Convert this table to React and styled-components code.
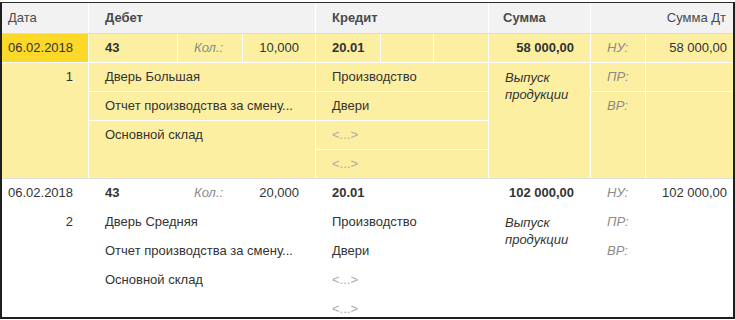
import styled, { createGlobalStyle } from "styled-components";

const GlobalStyle = createGlobalStyle`
  html, body {
    margin: 0;
    padding: 0;
    background: #ffffff;
  }
  body {
    font-family: "Liberation Sans", Arial, sans-serif;
    font-size: 13px;
    color: #333333;
  }
`;

const COLUMNS = "86px 88px 64px 72px 64px 52px 54px 101px 54px 1fr";

const Page = styled.div`
  padding-top: 2px;
  width: 735px;
`;

const Frame = styled.div`
  box-sizing: border-box;
  width: 735px;
  height: 317px;
  border-top: 1px solid #2b2b2b;
  border-left: 2px solid #1e1e1e;
  border-right: 2px solid #1e1e1e;
  border-bottom: 2px solid #1e1e1e;
  overflow: hidden;
  background: #ffffff;
`;

const Header = styled.div`
  display: grid;
  grid-template-columns: ${COLUMNS};
  grid-template-rows: 30px;
  column-gap: 1px;
  background: #ffffff;
  border-bottom: 1px solid #dcdcdc;
`;

const HeaderCell = styled.div`
  grid-column: ${(p) => p.$col};
  background: #f2f2f2;
  color: #4a4a4a;
  font-weight: ${(p) => (p.$bold ? 700 : 400)};
  line-height: 30px;
  padding: ${(p) => p.$pad || "0 16px"};
  text-align: ${(p) => p.$align || "left"};
  white-space: nowrap;
`;

const Body = styled.div`
  display: flex;
  flex-direction: column;
  gap: 1px;
  background: #dedede;
`;

const Record = styled.div`
  display: grid;
  grid-template-columns: ${COLUMNS};
  grid-template-rows: repeat(5, 28px);
  gap: 1px;
  background: #ffffff;
`;

const Cell = styled.div`
  grid-column: ${(p) => p.$col};
  grid-row: ${(p) => p.$row};
  background: ${(p) => (p.$accent ? "#fcd829" : p.$selected ? "#fcefa1" : "#ffffff")};
  padding: ${(p) => p.$pad || "0 16px"};
  line-height: 28px;
  text-align: ${(p) => p.$align || "left"};
  font-weight: ${(p) => (p.$bold ? 700 : 400)};
  font-style: ${(p) => (p.$label || p.$note ? "italic" : "normal")};
  color: ${(p) => (p.$label ? "#8a8a8a" : p.$empty ? "#a9a9a9" : "#333333")};
  white-space: nowrap;
  overflow: hidden;
`;

const Note = styled(Cell)`
  white-space: normal;
  line-height: 17px;
  padding: 6px 16px 0;
`;

const records = [
  {
    date: "06.02.2018",
    num: "1",
    account: "43",
    qty: "10,000",
    item: "Дверь Большая",
    doc: "Отчет производства за смену...",
    store: "Основной склад",
    credit: "20.01",
    division: "Производство",
    group: "Двери",
    sum: "58 000,00",
    note: "Выпуск продукции",
    sumDt: "58 000,00",
    selected: true,
  },
  {
    date: "06.02.2018",
    num: "2",
    account: "43",
    qty: "20,000",
    item: "Дверь Средняя",
    doc: "Отчет производства за смену...",
    store: "Основной склад",
    credit: "20.01",
    division: "Производство",
    group: "Двери",
    sum: "102 000,00",
    note: "Выпуск продукции",
    sumDt: "102 000,00",
    selected: false,
  },
];

function Entry({ r }) {
  const s = r.selected;
  return (
    <Record>
      <Cell $col="1" $row="1" $selected={s} $accent={s} $pad="0 16px 0 6px">
        {r.date}
      </Cell>
      <Cell $col="1" $row="2 / 6" $selected={s} $align="right" $pad="0 15px 0 6px">
        {r.num}
      </Cell>

      <Cell $col="2" $row="1" $selected={s} $bold>
        {r.account}
      </Cell>
      <Cell $col="3" $row="1" $selected={s} $label>
        Кол.:
      </Cell>
      <Cell $col="4" $row="1" $selected={s} $align="right">
        {r.qty}
      </Cell>
      <Cell $col="2 / 5" $row="2" $selected={s}>
        {r.item}
      </Cell>
      <Cell $col="2 / 5" $row="3" $selected={s}>
        {r.doc}
      </Cell>
      <Cell $col="2 / 5" $row="4 / 6" $selected={s}>
        {r.store}
      </Cell>

      <Cell $col="5" $row="1" $selected={s} $bold>
        {r.credit}
      </Cell>
      <Cell $col="6" $row="1" $selected={s} />
      <Cell $col="7" $row="1" $selected={s} />
      <Cell $col="5 / 8" $row="2" $selected={s}>
        {r.division}
      </Cell>
      <Cell $col="5 / 8" $row="3" $selected={s}>
        {r.group}
      </Cell>
      <Cell $col="5 / 8" $row="4" $selected={s} $empty>
        {"<...>"}
      </Cell>
      <Cell $col="5 / 8" $row="5" $selected={s} $empty>
        {"<...>"}
      </Cell>

      <Cell $col="8" $row="1" $selected={s} $bold $align="right">
        {r.sum}
      </Cell>
      <Note $col="8" $row="2 / 6" $selected={s} $note>
        {r.note}
      </Note>

      <Cell $col="9" $row="1" $selected={s} $label>
        НУ:
      </Cell>
      <Cell $col="9" $row="2" $selected={s} $label>
        ПР:
      </Cell>
      <Cell $col="9" $row="3 / 6" $selected={s} $label>
        ВР:
      </Cell>

      <Cell $col="10" $row="1" $selected={s} $align="right" $pad="0 6px 0 16px">
        {r.sumDt}
      </Cell>
      <Cell $col="10" $row="2" $selected={s} />
      <Cell $col="10" $row="3 / 6" $selected={s} />
    </Record>
  );
}

export default function App() {
  return (
    <Page>
      <GlobalStyle />
      <Frame>
        <Header>
          <HeaderCell $col="1" $pad="0 16px 0 6px">
            Дата
          </HeaderCell>
          <HeaderCell $col="2 / 5" $bold>
            Дебет
          </HeaderCell>
          <HeaderCell $col="5 / 8" $bold>
            Кредит
          </HeaderCell>
          <HeaderCell $col="8" $bold $pad="0 14px">
            Сумма
          </HeaderCell>
          <HeaderCell $col="9 / 11" $align="right" $pad="0 7px 0 16px">
            Сумма Дт
          </HeaderCell>
        </Header>
        <Body>
          {records.map((r) => (
            <Entry key={r.num} r={r} />
          ))}
        </Body>
      </Frame>
    </Page>
  );
}
